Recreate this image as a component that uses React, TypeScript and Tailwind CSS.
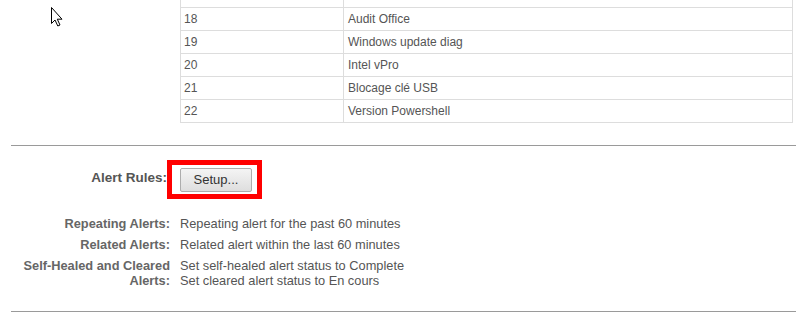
const rows = [
  { id: "18", name: "Audit Office" },
  { id: "19", name: "Windows update diag" },
  { id: "20", name: "Intel vPro" },
  { id: "21", name: "Blocage clé USB" },
  { id: "22", name: "Version Powershell" },
];

const alerts = [
  { label: "Repeating Alerts:", value: ["Repeating alert for the past 60 minutes"] },
  { label: "Related Alerts:", value: ["Related alert within the last 60 minutes"] },
  {
    label: "Self-Healed and Cleared Alerts:",
    value: ["Set self-healed alert status to Complete", "Set cleared alert status to En cours"],
  },
];

function Cursor() {
  return (
    <svg
      className="absolute left-[50px] top-[6px]"
      width="13"
      height="21"
      viewBox="0 0 13 21"
    >
      <path
        d="M1.5 1.5 L1.5 17.5 L5 14 L7.8 20 L10 19 L7.3 13.2 L12 13.2 Z"
        fill="#fff"
        stroke="#000"
        strokeWidth="1"
        strokeLinejoin="miter"
      />
    </svg>
  );
}

export default function App() {
  return (
    <div className="relative h-[317px] w-[796px] overflow-hidden bg-white font-['Liberation_Sans',Arial,sans-serif]">
      <Cursor />

      {/* table (scrolled, top row cut off) */}
      <div className="ml-[180px] w-[613px] text-[12px] text-[#555]">
        <div className="grid h-[8px] grid-cols-[162px_1fr] border-x border-b border-[#ddd]">
          <div />
          <div className="border-l border-[#ddd]" />
        </div>
        {rows.map((r) => (
          <div
            key={r.id}
            className="grid h-[23px] grid-cols-[162px_1fr] border-x border-b border-[#ddd]"
          >
            <div className="flex items-center pl-[3px]">{r.id}</div>
            <div className="flex items-center border-l border-[#ddd] pl-[4px]">{r.name}</div>
          </div>
        ))}
      </div>

      <div className="ml-[11px] mt-[22px] h-px bg-[#9a9a9a]" />

      {/* alert rules */}
      <div className="relative mt-[22px] flex items-start text-[12.8px]">
        <div className="mt-[2px] w-[170px] pr-[3px] text-right text-[13.5px] font-bold leading-[15px] text-[#555]">
          Alert Rules:
        </div>
        <div className="pl-[10px]">
          <button className="h-[24px] w-[72px] rounded-[2px] border border-[#adadad] bg-gradient-to-b from-[#f4f4f4] to-[#dedede] text-[13px] text-[#333]">
            Setup...
          </button>
        </div>
        <div className="absolute left-[167px] top-[-8px] h-[39px] w-[95px] border-[5px] border-[#ff0000]" />
      </div>

      <div className="mt-[24px] flex flex-col gap-[6px] text-[12.8px] leading-[15px]">
        {alerts.map((a) => (
          <div key={a.label} className="flex items-start">
            <div className="w-[170px] text-right font-bold text-[#666]">{a.label}</div>
            <div className="pl-[10px] text-[#555]">
              {a.value.map((v) => (
                <div key={v}>{v}</div>
              ))}
            </div>
          </div>
        ))}
      </div>

      <div className="ml-[11px] mt-[23px] h-px bg-[#9a9a9a]" />
    </div>
  );
}
